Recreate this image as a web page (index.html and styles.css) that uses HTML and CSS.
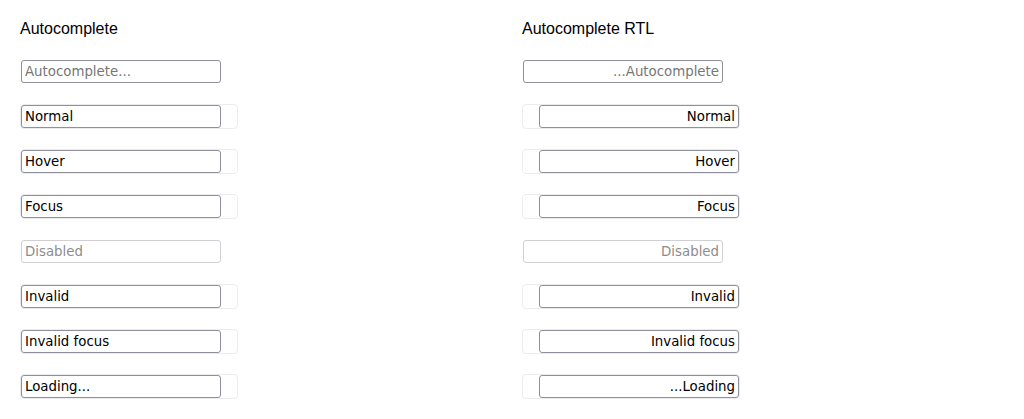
FILE: index.html
```html
<!DOCTYPE html>
<html>
<head>
<meta charset="utf-8">
<link rel="stylesheet" href="styles.css">
</head>
<body>
<div class="page">
  <section class="col">
    <h2 class="title">Autocomplete</h2>
    <div class="rows">
      <div class="row plain"><input class="field" placeholder="Autocomplete..."></div>
      <div class="row combo"><input class="field" value="Normal"><span class="toggle"></span></div>
      <div class="row combo"><input class="field" value="Hover"><span class="toggle"></span></div>
      <div class="row combo"><input class="field" value="Focus"><span class="toggle"></span></div>
      <div class="row plain"><input class="field" placeholder="Disabled" disabled></div>
      <div class="row combo"><input class="field" value="Invalid"><span class="toggle"></span></div>
      <div class="row combo"><input class="field" value="Invalid focus"><span class="toggle"></span></div>
      <div class="row combo"><input class="field" value="Loading..."><span class="toggle"></span></div>
    </div>
  </section>
  <section class="col">
    <h2 class="title">Autocomplete RTL</h2>
    <div class="rows">
      <div class="row plain" dir="rtl"><input class="field" dir="rtl" placeholder="Autocomplete..."></div>
      <div class="row combo" dir="rtl"><input class="field" dir="rtl" value="Normal"><span class="toggle"></span></div>
      <div class="row combo" dir="rtl"><input class="field" dir="rtl" value="Hover"><span class="toggle"></span></div>
      <div class="row combo" dir="rtl"><input class="field" dir="rtl" value="Focus"><span class="toggle"></span></div>
      <div class="row plain" dir="rtl"><input class="field" dir="rtl" placeholder="Disabled" disabled></div>
      <div class="row combo" dir="rtl"><input class="field" dir="rtl" value="Invalid"><span class="toggle"></span></div>
      <div class="row combo" dir="rtl"><input class="field" dir="rtl" value="Invalid focus"><span class="toggle"></span></div>
      <div class="row combo" dir="rtl"><input class="field" dir="rtl" value="Loading..."><span class="toggle"></span></div>
    </div>
  </section>
</div>
</body>
</html>
```

FILE: styles.css
```css
html, body {
  margin: 0;
  padding: 0;
  background: #ffffff;
}

.page {
  display: grid;
  grid-template-columns: 502px 502px;
  padding: 20px 0 0 20px;
}

.col {
  display: flex;
  flex-direction: column;
  align-items: flex-start;
}

.title {
  margin: 0;
  font-family: "Liberation Sans", Arial, sans-serif;
  font-size: 16px;
  font-weight: normal;
  line-height: 18px;
  color: #000;
}

.rows {
  display: flex;
  flex-direction: column;
  align-items: flex-start;
  gap: 20px;
  margin-top: 21px;
}

.row {
  display: flex;
  border: 1px solid transparent;
  border-radius: 4px;
  height: 25px;
  box-sizing: border-box;
}

.row.combo {
  border-color: #ececee;
}

.field {
  width: 200px;
  height: 23px;
  box-sizing: border-box;
  margin: 0;
  padding: 0 4px 0 3px;
  border: 1px solid #8f8f9d;
  border-radius: 3px;
  background: #ffffff;
  font-family: "DejaVu Sans", sans-serif;
  font-size: 13.33px;
  color: #000;
  outline: none;
}

.field[dir="rtl"] {
  padding: 0 3px 0 4px;
}

.field::placeholder {
  color: #767676;
  opacity: 1;
}

.field:disabled {
  border-color: #cfcfd4;
  background: #ffffff;
}

.field:disabled::placeholder {
  color: #8d8d8d;
}

.toggle {
  display: block;
  width: 16px;
}
```
